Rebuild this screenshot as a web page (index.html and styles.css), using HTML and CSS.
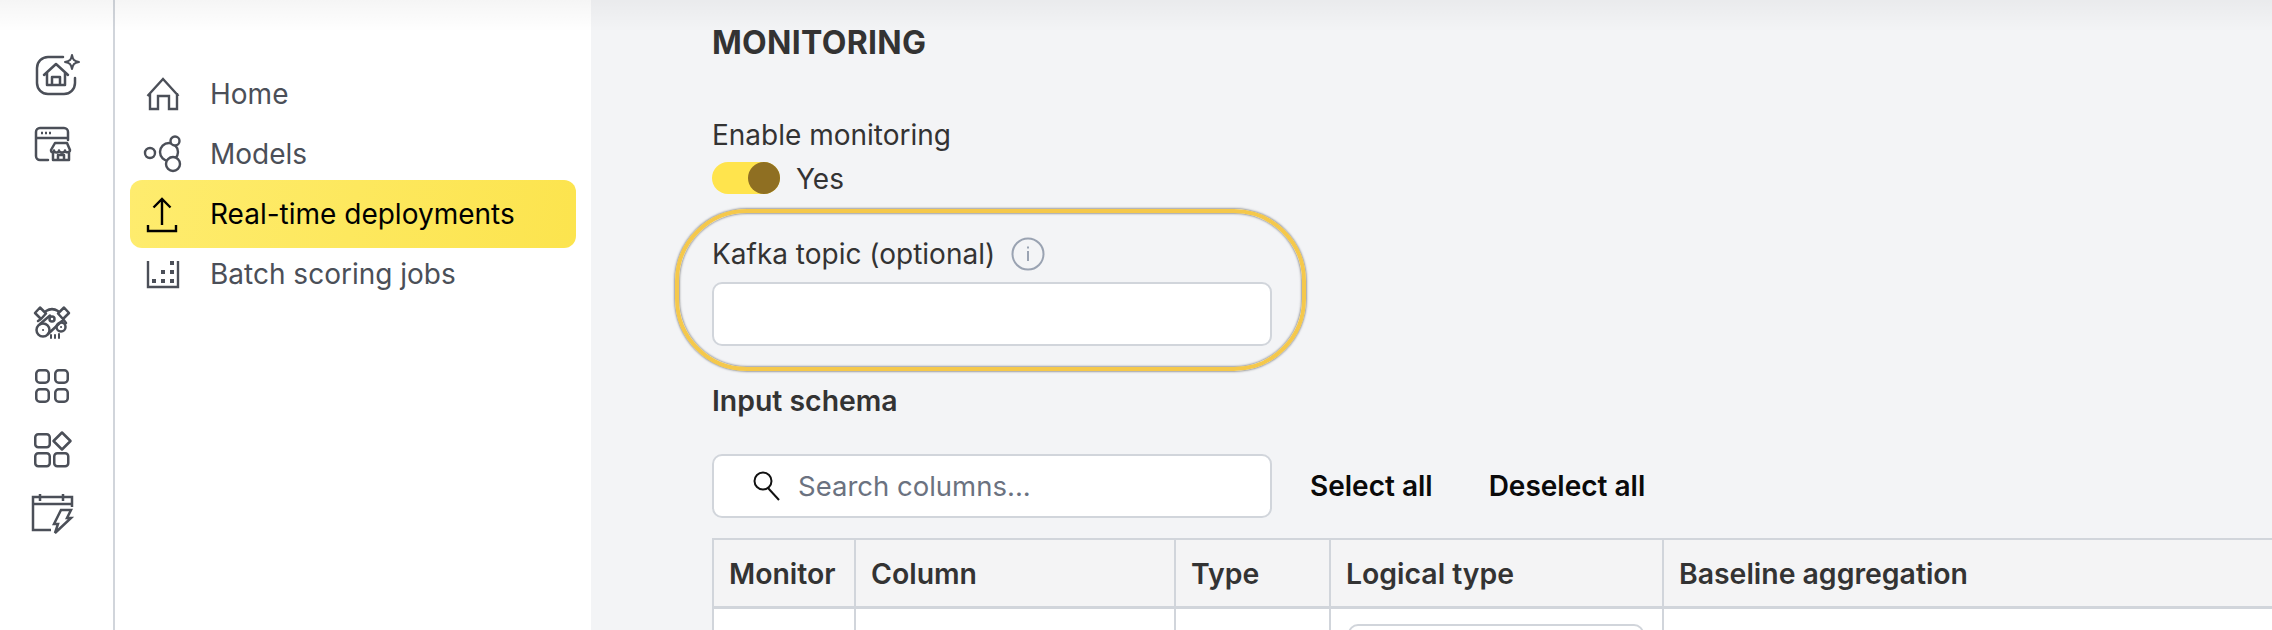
FILE: index.html
```html
<!DOCTYPE html>
<html lang="en">
<head>
<meta charset="utf-8">
<title>Monitoring</title>
<link rel="stylesheet" href="styles.css">
</head>
<body>
<div class="topshade"></div>
<div class="app">
  <aside class="rail">
    <div class="rail-top">
      <svg class="ri" viewBox="0 0 56 48"><path d="M35 6H20a11 11 0 0 0-11 11V32a11 11 0 0 0 11 11H36a11 11 0 0 0 11-11V27"/><path class="thin" d="M44 4C45 9 46 10 51 11C46 12 45 13 44 18C43 13 42 12 37 11C42 10 43 9 44 4Z"/><path d="M16 24L28 13L40 24M19 22V34H37V22M24 34V26H32V34"/></svg>
      <svg class="ri" viewBox="0 0 56 48"><path d="M20 40H12a4 4 0 0 1-4-4V12a4 4 0 0 1 4-4H36a4 4 0 0 1 4 4V20M8 18H40"/><path class="dots" d="M13 13h2M17 13h2M21 13h2"/><path d="M27 23H39L42 30C42 33 37 33 37 30.500C37 33 31 33 31 30.500C31 33 26 33 26 30.500C26 33 23 33 23 30ZM25 32V40H41V32M30 40V35H36V40"/></svg>
    </div>
    <div class="rail-bottom">
      <svg class="ri" viewBox="0 0 56 48"><path d="M7 15L12 9.500L18 15.500L13 21ZM41 15L36 9.500L30 15.500L35 21ZM18 13C22 10.500 26 10.500 30 13M13 21L10 23M35 21L38 25M12 26L22 17.500M20 36L34 23"/><circle cx="15" cy="32" r="6.500"/><circle cx="33" cy="29" r="4.500"/><circle cx="24" cy="21" r="2.500"/><path class="thin" d="M15 32h.1M33 29h.1M23 37v3M27 37v3M31 36v4"/></svg>
      <svg class="ri" viewBox="0 0 56 48"><rect x="8.250" y="8.250" width="12.500" height="12.500" rx="3.500"/><rect x="27.250" y="8.250" width="12.500" height="12.500" rx="3.500"/><rect x="8.250" y="27.250" width="12.500" height="12.500" rx="3.500"/><rect x="27.250" y="27.250" width="12.500" height="12.500" rx="3.500"/></svg>
      <svg class="ri" viewBox="0 0 56 48"><rect x="7.250" y="8.250" width="14.500" height="13" rx="3"/><path d="M34 6.500L42.500 15L34 23.500L25.500 15Z"/><rect x="7.250" y="27.250" width="14.500" height="13" rx="3"/><rect x="26.250" y="27.250" width="14" height="13" rx="3"/></svg>
      <svg class="ri" viewBox="0 0 56 48"><path class="miter" d="M23 40H5V7H44V17M5 14H44M12 4V11M35 4V11"/><path class="miter" d="M33 20H43L39 28H43L27 43L30 34H26Z"/></svg>
    </div>
  </aside>
  <nav class="nav">
    <a class="nav-item"><svg class="ni" viewBox="0 0 40 40"><path d="M4.500 22L20 5L35.500 22M7 19V35H15V22H26V35H34V19"/></svg><span>Home</span></a>
    <a class="nav-item"><svg class="ni" viewBox="0 0 40 40"><circle cx="7" cy="19" r="5"/><circle cx="26" cy="18" r="9"/><circle class="fill" cx="32" cy="7" r="4.500"/><circle class="fill" cx="30" cy="30" r="7"/></svg><span>Models</span></a>
    <a class="nav-item active"><svg class="ni" viewBox="0 0 40 40"><path d="M19 5V31M10.500 13.500L19 5L27.500 13.500M5 31V37H33V31"/></svg><span>Real-time deployments</span></a>
    <a class="nav-item"><svg class="ni" viewBox="0 0 40 40"><path d="M5 7V33H35V7"/><path class="sq" d="M9 25h4v4H9zM18 25h4v4h-4zM27 25h4v4h-4zM18 16h4v4h-4zM27 16h4v4h-4zM27 7h4v4h-4z"/></svg><span>Batch scoring jobs</span></a>
  </nav>
  <main class="main">
    <h1 class="title">MONITORING</h1>
    <div class="label enable">Enable monitoring</div>
    <div class="toggle-row"><span class="toggle"><span class="thumb"></span></span><span class="label yes">Yes</span></div>
    <section class="ring">
      <div class="label-row"><span class="label">Kafka topic (optional)</span><svg class="info" viewBox="0 0 34 34"><circle cx="17" cy="17" r="15.500"/><path d="M17 14V24M17 9.500V11.500"/></svg></div>
      <div class="field"></div>
    </section>
    <h2 class="sub">Input schema</h2>
    <div class="search-row">
      <div class="field search"><svg class="glass" viewBox="0 0 30 30"><circle cx="11" cy="10" r="8.500"/><path d="M16 17L27 29"/></svg><span class="ph">Search columns...</span></div>
      <button class="link first">Select all</button>
      <button class="link">Deselect all</button>
    </div>
    <div class="table">
      <div class="th">Monitor</div>
      <div class="th">Column</div>
      <div class="th">Type</div>
      <div class="th">Logical type</div>
      <div class="th">Baseline aggregation</div>
      <div class="td"></div>
      <div class="td"></div>
      <div class="td"></div>
      <div class="td"><div class="select"></div></div>
      <div class="td"></div>
    </div>
  </main>
</div>
</body>
</html>
```
FILE: styles.css
```css
* { box-sizing: border-box; }
html, body { margin: 0; height: 630px; overflow: hidden; }
body { font-family: Inter, "Liberation Sans", sans-serif; background: #f3f4f6; color: #333; position: relative; }
.topshade { position: absolute; left: 0; top: 0; right: 0; height: 32px; background: linear-gradient(rgba(0,0,0,.04), rgba(0,0,0,0)); pointer-events: none; z-index: 5; }
.app { display: flex; height: 630px; }

.rail { width: 115px; flex: none; background: #fff; border-right: 2px solid #d1d5db; padding: 51px 0 0 28px; }
.rail-top { display: flex; flex-direction: column; gap: 21px; }
.rail-bottom { display: flex; flex-direction: column; gap: 16px; margin-top: 130px; }
.ri { width: 56px; height: 48px; display: block; fill: none; stroke: #4b4f58; stroke-width: 2.500; stroke-linecap: round; stroke-linejoin: round; }
.ri .thin { stroke-width: 2; }
.ri .dots { stroke-width: 2.500; stroke-linecap: butt; }
.ri .miter { stroke-linejoin: miter; stroke-linecap: butt; }

.nav { width: 476px; flex: none; background: #fff; padding: 64px 15px 0; display: flex; flex-direction: column; }
.nav-item { height: 60px; display: flex; align-items: center; gap: 27px; padding-left: 13px; font-size: 28px; color: #4b4f58; border-radius: 12px; }
.nav-item.active { height: 68px; margin: -4px 0; background: linear-gradient(100deg, #feec6e, #fce44e); color: #000; position: relative; }
.ni { width: 40px; height: 40px; flex: none; fill: none; stroke: currentColor; stroke-width: 2.400; }
.ni .fill { fill: #fff; }
.ni .sq { fill: currentColor; stroke: none; }

.main { flex: 1; min-width: 0; padding: 25px 0 0 121px; overflow: hidden; }
.title { margin: 0; font-size: 32px; line-height: 36px; font-weight: 700; letter-spacing: .3px; color: #333; }
.label { font-size: 28px; line-height: 34px; color: #333; }
.enable { margin-top: 57px; }
.toggle-row { display: flex; align-items: center; gap: 16px; margin-top: 10px; height: 32px; }
.yes { position: relative; top: 1px; }
.toggle { width: 68px; height: 32px; border-radius: 16px; background: #ffe44d; display: flex; justify-content: flex-end; }
.thumb { width: 32px; height: 32px; border-radius: 50%; background: #8f6f22; }
.ring { margin: 15px 0 0 -37px; width: 631px; height: 162px; border: 4px solid #f5c84b; border-radius: 72px; padding: 24px 0 0 33px; box-shadow: 0 0 2px 1px rgba(90,90,90,.55), inset 0 0 2px 1px rgba(90,90,90,.55); }
.label-row { display: flex; align-items: center; gap: 16px; height: 34px; }
.info { width: 34px; height: 34px; flex: none; fill: none; stroke: #9aa3b2; stroke-width: 2; }
.field { width: 560px; height: 64px; margin-top: 11px; background: #fff; border: 2px solid #d1d5db; border-radius: 10px; }
.sub { margin: 13px 0 0; font-size: 28.400px; line-height: 34px; font-weight: 600; color: #333; }
.search-row { display: flex; align-items: center; margin-top: 36px; }
.search { margin-top: 0; display: flex; align-items: center; padding-left: 38px; gap: 16px; flex: none; }
.glass { width: 30px; height: 30px; flex: none; fill: none; stroke: #111; stroke-width: 2; }
.ph { font-size: 27.500px; color: #6b7280; }
.link { border: 0; background: none; padding: 0; font: 600 28px Inter, "Liberation Sans", sans-serif; color: #0a0a0a; margin-left: 56px; }
.link.first { margin-left: 38px; }
.table { display: grid; grid-template-columns: 142px 320px 155px 333px 700px; grid-template-rows: 69px 100px; margin-top: 20px; border-top: 2px solid #d1d5db; border-left: 2px solid #d1d5db; width: 1652px; }
.th { background: #f4f4f5; border-right: 2px solid #d1d5db; border-bottom: 3px solid #d1d5db; font-size: 28.400px; font-weight: 600; color: #333; padding-left: 15px; display: flex; align-items: center; }
.td { background: #fff; border-right: 2px solid #d1d5db; padding: 15px 0 0 17px; }
.select { width: 296px; height: 60px; background: #fff; border: 2px solid #d1d5db; border-radius: 10px; }
```
